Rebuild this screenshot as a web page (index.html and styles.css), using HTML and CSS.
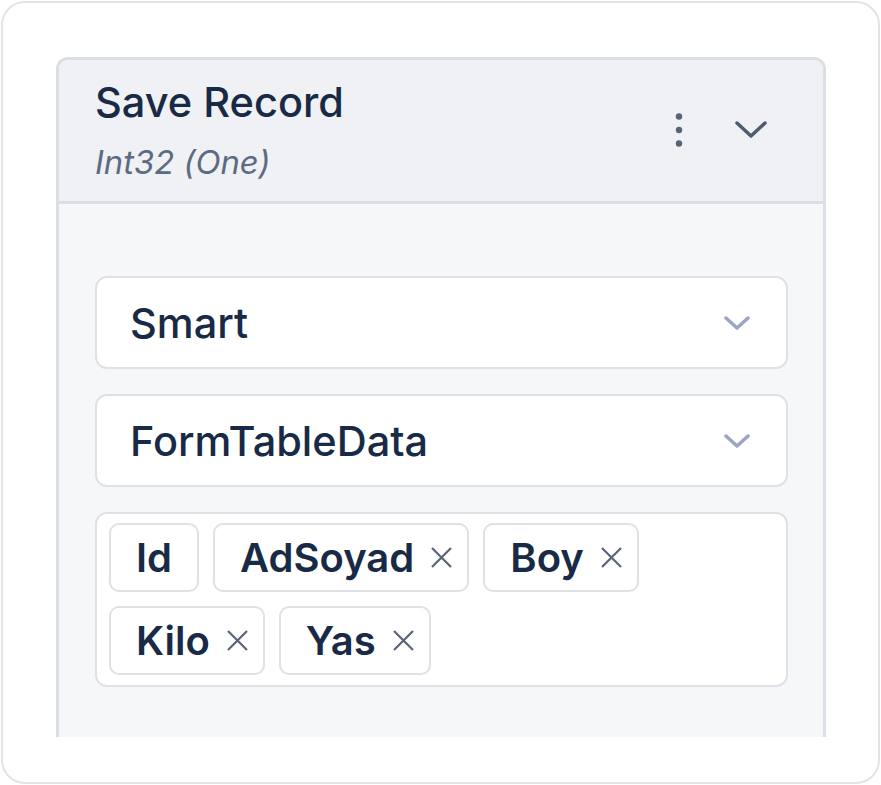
FILE: index.html
```html
<!DOCTYPE html>
<html>
<head>
<meta charset="utf-8">
<link rel="stylesheet" href="styles.css">
</head>
<body>
<div class="card">
  <div class="viewport">
    <div class="panel">
      <div class="panel-header">
        <div class="titles">
          <div class="title">Save Record</div>
          <div class="subtitle">Int32 (One)</div>
        </div>
        <div class="actions">
          <svg class="dots" width="8" height="36" viewBox="0 0 8 36"><circle cx="4" cy="4.5" r="3.2"/><circle cx="4" cy="18" r="3.2"/><circle cx="4" cy="31.5" r="3.2"/></svg>
          <svg class="chev-head" width="32" height="20" viewBox="0 0 32 20"><path d="M2 3 L16 16 L30 3"/></svg>
        </div>
      </div>
      <div class="panel-body">
        <div class="select">
          <span class="select-text">Smart</span>
          <svg class="chev" width="26" height="16" viewBox="0 0 26 16"><path d="M2 3 L13 13 L24 3"/></svg>
        </div>
        <div class="select">
          <span class="select-text">FormTableData</span>
          <svg class="chev" width="26" height="16" viewBox="0 0 26 16"><path d="M2 3 L13 13 L24 3"/></svg>
        </div>
        <div class="tags">
          <div class="tag tag-fixed">Id</div>
          <div class="tag">AdSoyad<svg class="x" width="23" height="23" viewBox="0 0 23 23"><path d="M2 2 L21 21 M21 2 L2 21"/></svg></div>
          <div class="tag">Boy<svg class="x" width="23" height="23" viewBox="0 0 23 23"><path d="M2 2 L21 21 M21 2 L2 21"/></svg></div>
          <div class="tag">Kilo<svg class="x" width="23" height="23" viewBox="0 0 23 23"><path d="M2 2 L21 21 M21 2 L2 21"/></svg></div>
          <div class="tag">Yas<svg class="x" width="23" height="23" viewBox="0 0 23 23"><path d="M2 2 L21 21 M21 2 L2 21"/></svg></div>
        </div>
      </div>
    </div>
  </div>
</div>
</body>
</html>
```
FILE: styles.css
```css
* { box-sizing: border-box; }
html, body { margin: 0; padding: 0; background: #ffffff; }
body {
  font-family: Inter, "Noto Sans", sans-serif;
  color: #182a45;
}
.card {
  margin: 1px;
  width: 879px;
  height: 783px;
  border: 2px solid #e1e3e8;
  border-radius: 24px;
  padding: 54px 52px 0 53px;
  background: #fff;
}
.viewport {
  height: 680px;
  overflow: hidden;
}
.panel {
  border: 3px solid #dcdee5;
  border-bottom: none;
  border-radius: 12px 12px 0 0;
  background: #f6f7f9;
  min-height: 760px;
}
.panel-header {
  background: #eff1f4;
  border-bottom: 3px solid #dcdee5;
  border-radius: 9px 9px 0 0;
  height: 144px;
  padding: 17px 56px 0 36px;
  display: flex;
  justify-content: space-between;
  align-items: flex-start;
}
.title {
  font-size: 41.5px;
  font-weight: 500;
  line-height: 50px;
  color: #182a45;
}
.subtitle {
  font-size: 32.8px;
  font-style: italic;
  line-height: 36px;
  margin-top: 17px;
  color: #5d6b82;
}
.actions {
  display: flex;
  align-items: center;
  gap: 52px;
  margin-top: 35px;
}
.dots { fill: #586379; }
.chev-head path { fill: none; stroke: #4f5b70; stroke-width: 3.5; stroke-linecap: round; stroke-linejoin: round; }
.panel-body {
  padding: 72px 35px 0 36px;
  display: flex;
  flex-direction: column;
  gap: 25px;
}
.select {
  height: 93px;
  background: #fff;
  border: 2px solid #dfe1e6;
  border-radius: 12px;
  display: flex;
  align-items: center;
  justify-content: space-between;
  padding: 0 36px 0 33px;
}
.select-text {
  font-size: 41.5px;
  font-weight: 500;
}
.chev path { fill: none; stroke: #9aa5c0; stroke-width: 3.5; stroke-linecap: round; stroke-linejoin: round; }
.tags {
  background: #fff;
  border: 2px solid #dfe1e6;
  border-radius: 12px;
  padding: 9px 12px 10px 12px;
  display: flex;
  flex-wrap: wrap;
  gap: 14px;
  min-height: 175px;
  align-content: flex-start;
}
.tag {
  height: 69px;
  border: 2px solid #dfe1e6;
  border-radius: 10px;
  display: flex;
  align-items: center;
  gap: 16px;
  padding: 0 14px 0 25px;
  font-size: 40px;
  font-weight: 600;
}
.tag-fixed { padding-right: 25px; }
.x path { fill: none; stroke: #5a6478; stroke-width: 2.2; }
```
